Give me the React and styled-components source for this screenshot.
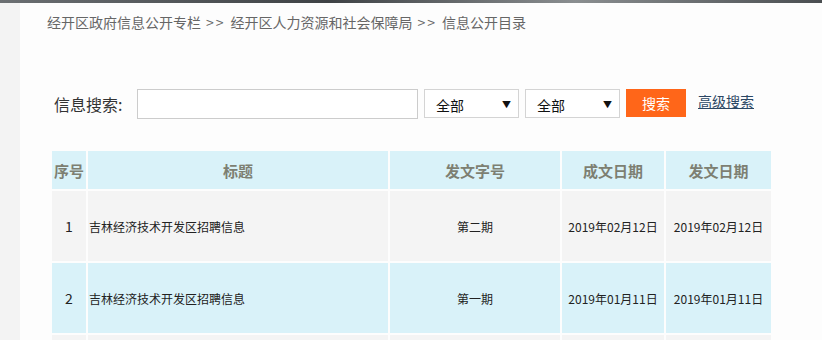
import React from 'react';
import styled, { createGlobalStyle } from 'styled-components';

const GlobalStyle = createGlobalStyle`
  body {
    margin: 0;
    background: #f3f3f3;
    font-family: "Noto Sans CJK SC", "Liberation Sans", sans-serif;
    overflow: hidden;
  }
`;

const TopStrip = styled.div`
  height: 3px;
  background: linear-gradient(90deg, #6b6f72, #3e4245 40%, #8a8e90 70%, #4a4e51);
`;

const Layout = styled.div`
  display: flex;
  height: 337px;
`;

const Gutter = styled.div`
  width: 20px;
  background: #f3f3f3;
`;

const Panel = styled.div`
  flex: 1;
  background: #fdfdfd;
`;

const Breadcrumb = styled.div`
  padding: 9px 0 0 27px;
  font-size: 14px;
  line-height: 20px;
  color: #666;
`;

const Sep = styled.span`
  margin: 0 5px;
  letter-spacing: 2px;
`;

const SearchRow = styled.div`
  display: flex;
  align-items: flex-start;
  margin: 57px 0 0 34px;
  height: 30px;
`;

const Label = styled.span`
  width: 83px;
  font-size: 16px;
  line-height: 30px;
  color: #333;
`;

const Input = styled.div`
  width: 279px;
  height: 28px;
  border: 1px solid #ccc;
  background: #fff;
`;

const Select = styled.div`
  display: flex;
  align-items: center;
  justify-content: space-between;
  box-sizing: border-box;
  width: 95px;
  height: 29px;
  margin-left: 6px;
  padding: 2px 7px 0 11px;
  border: 1px solid #d4d4d4;
  background: #fff;
  font-size: 14px;
  color: #111;
  span {
    font-size: 9px;
  }
`;

const Button = styled.div`
  width: 60px;
  height: 28px;
  margin-left: 6px;
  background: #ff6619;
  color: #fff;
  font-size: 14px;
  line-height: 28px;
  text-align: center;
`;

const Link = styled.a`
  margin-left: 12px;
  font-size: 14px;
  line-height: 24px;
  color: #2b4764;
  text-decoration: underline;
`;

const Table = styled.div`
  display: grid;
  grid-template-columns: 34px 300px 170px 102px 105px;
  grid-auto-rows: 70px;
  grid-template-rows: 38px;
  gap: 2px;
  margin: 32px 0 0 32px;
  width: 721px;
`;

const Head = styled.div`
  background: #d9f2f9;
  color: #7d7f72;
  font-weight: bold;
  font-size: 15px;
  display: flex;
  align-items: center;
  justify-content: center;
`;

const Cell = styled.div`
  background: ${p => (p.alt ? '#d9f2f9' : '#f4f4f4')};
  color: #222;
  font-size: ${p => (p.big ? '14px' : '12px')};
  display: flex;
  align-items: center;
  justify-content: ${p => (p.left ? 'flex-start' : 'center')};
  padding-left: ${p => (p.left ? '1px' : '0')};
`;

const rows = [
  { no: 1, title: '吉林经济技术开发区招聘信息', code: '第二期', made: '2019年02月12日', pub: '2019年02月12日' },
  { no: 2, title: '吉林经济技术开发区招聘信息', code: '第一期', made: '2019年01月11日', pub: '2019年01月11日' },
  { no: 3, title: '', code: '', made: '', pub: '' },
];

const App = () => (
  <>
    <GlobalStyle />
    <TopStrip />
    <Layout>
      <Gutter />
      <Panel>
        <Breadcrumb>
          经开区政府信息公开专栏<Sep>&gt;&gt;</Sep>经开区人力资源和社会保障局<Sep>&gt;&gt;</Sep>信息公开目录
        </Breadcrumb>
        <SearchRow>
          <Label>信息搜索:</Label>
          <Input />
          <Select>全部<span>▼</span></Select>
          <Select>全部<span>▼</span></Select>
          <Button>搜索</Button>
          <Link>高级搜索</Link>
        </SearchRow>
        <Table>
          <Head>序号</Head>
          <Head>标题</Head>
          <Head>发文字号</Head>
          <Head>成文日期</Head>
          <Head>发文日期</Head>
          {rows.map((r, i) => (
            <React.Fragment key={r.no}>
              <Cell alt={i % 2 === 1} big>{r.no === 3 ? '' : r.no}</Cell>
              <Cell alt={i % 2 === 1} left>{r.title}</Cell>
              <Cell alt={i % 2 === 1}>{r.code}</Cell>
              <Cell alt={i % 2 === 1}>{r.made}</Cell>
              <Cell alt={i % 2 === 1}>{r.pub}</Cell>
            </React.Fragment>
          ))}
        </Table>
      </Panel>
    </Layout>
  </>
);

export default App;
